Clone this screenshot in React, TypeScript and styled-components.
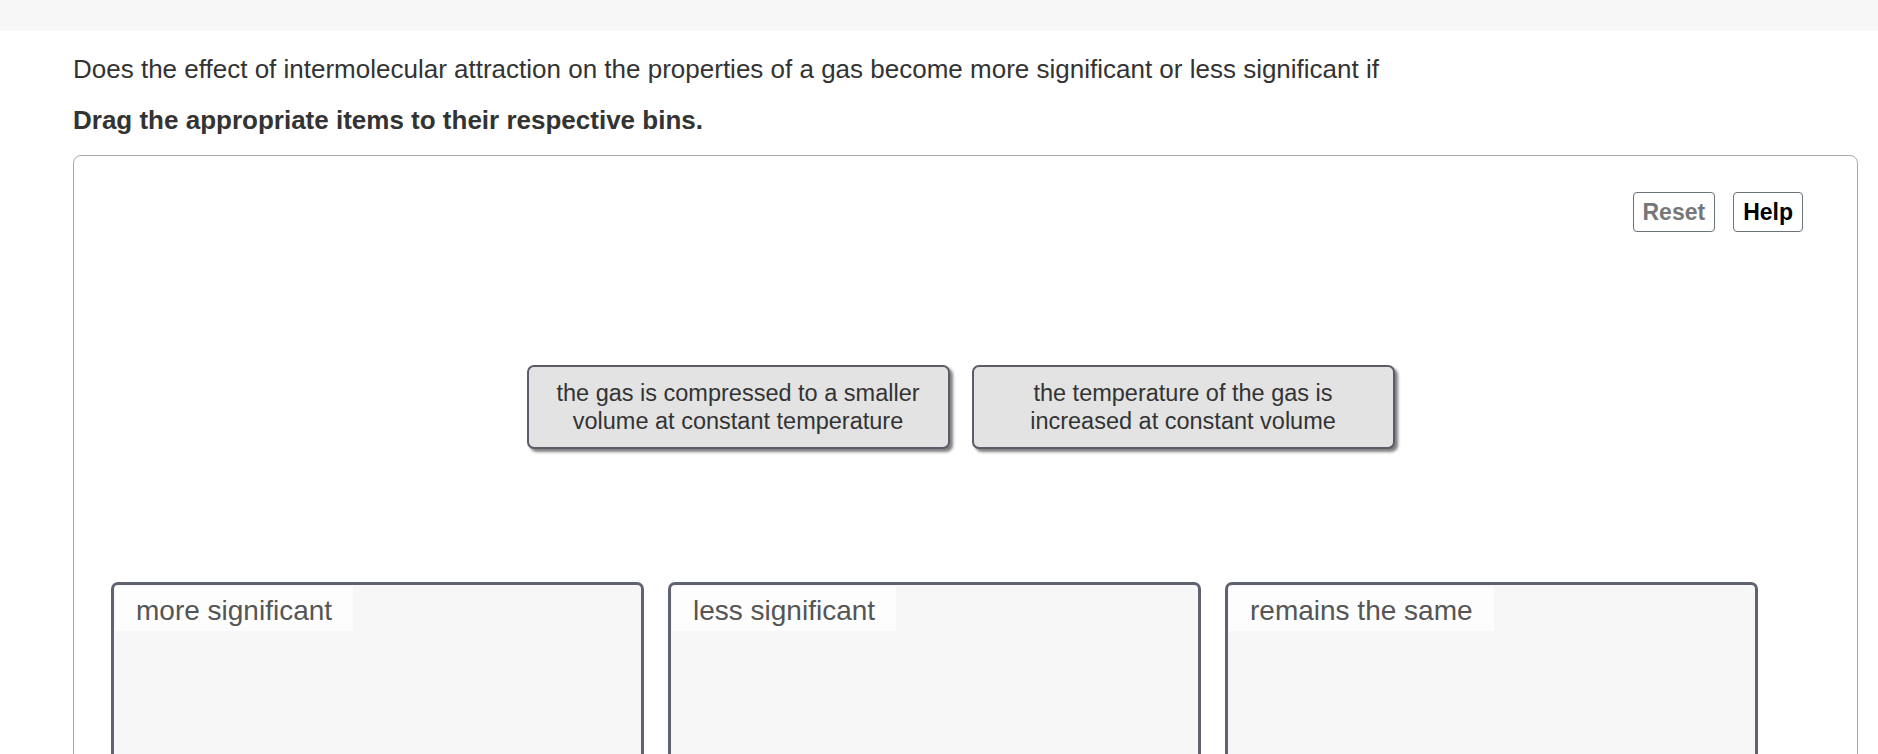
import React from 'react';
import styled, { createGlobalStyle } from 'styled-components';

const GlobalStyle = createGlobalStyle`
  html, body {
    margin: 0;
    padding: 0;
    background: #ffffff;
    font-family: "Liberation Sans", Arial, Helvetica, sans-serif;
    color: #333333;
    overflow: hidden;
  }
`;

const TopBar = styled.div`
  height: 31px;
  background: #f7f7f7;
`;

const Content = styled.div`
  padding: 0 20px 0 73px;
`;

const Question = styled.p`
  margin: 23px 0 0;
  font-size: 26px;
  line-height: 30px;
  color: #333333;
`;

const Instruction = styled.p`
  margin: 21px 0 0;
  font-size: 26px;
  line-height: 30px;
  font-weight: 700;
  color: #333333;
`;

const Panel = styled.div`
  margin-top: 20px;
  border: 1.5px solid #aaaaaa;
  border-radius: 8px;
  padding: 36px 36px 0;
  height: 640px;
  box-sizing: border-box;
`;

const Toolbar = styled.div`
  display: flex;
  justify-content: flex-end;
  gap: 18px;
  padding-right: 18px;
`;

const ToolButton = styled.button<{ $muted?: boolean }>`
  height: 40px;
  padding: 0 9px;
  border: 1.5px solid #6b7479;
  border-radius: 4px;
  background: #ffffff;
  font-family: inherit;
  font-size: 23px;
  font-weight: 700;
  color: ${(p) => (p.$muted ? '#777777' : '#000000')};
`;

const ItemRow = styled.div`
  display: flex;
  justify-content: center;
  gap: 22px;
  margin-top: 133px;
  padding-right: 10px;
`;

const Item = styled.div`
  width: 423px;
  height: 84px;
  box-sizing: border-box;
  display: flex;
  align-items: center;
  justify-content: center;
  text-align: center;
  background: #e3e3e3;
  border: 2.5px solid #5a5d66;
  border-radius: 7px;
  box-shadow: 3px 3px 3px rgba(0, 0, 0, 0.5);
  font-size: 23.5px;
  line-height: 28px;
  color: #333333;
`;

const BinRow = styled.div`
  display: flex;
  gap: 24px;
  margin-top: 133px;
  padding-left: 1px;
`;

const Bin = styled.div`
  width: 533px;
  height: 320px;
  box-sizing: border-box;
  background: #f7f7f7;
  border: 3px solid #5f6270;
  border-radius: 7px;
  padding: 1px;
`;

const BinLabel = styled.div`
  display: inline-block;
  height: 45px;
  line-height: 49px;
  padding: 0 21px;
  background: #fdfdfd;
  font-size: 28px;
  color: #555555;
`;

const items = [
  ['the gas is compressed to a smaller', 'volume at constant temperature'],
  ['the temperature of the gas is', 'increased at constant volume'],
];

const bins = ['more significant', 'less significant', 'remains the same'];

export default function App(): JSX.Element {
  return (
    <>
      <GlobalStyle />
      <TopBar />
      <Content>
        <Question>
          Does the effect of intermolecular attraction on the properties of a gas become more
          significant or less significant if
        </Question>
        <Instruction>Drag the appropriate items to their respective bins.</Instruction>
        <Panel>
          <Toolbar>
            <ToolButton $muted>Reset</ToolButton>
            <ToolButton>Help</ToolButton>
          </Toolbar>
          <ItemRow>
            {items.map(([a, b]) => (
              <Item key={a}>
                <span>
                  {a}
                  <br />
                  {b}
                </span>
              </Item>
            ))}
          </ItemRow>
          <BinRow>
            {bins.map((label) => (
              <Bin key={label}>
                <BinLabel>{label}</BinLabel>
              </Bin>
            ))}
          </BinRow>
        </Panel>
      </Content>
    </>
  );
}
